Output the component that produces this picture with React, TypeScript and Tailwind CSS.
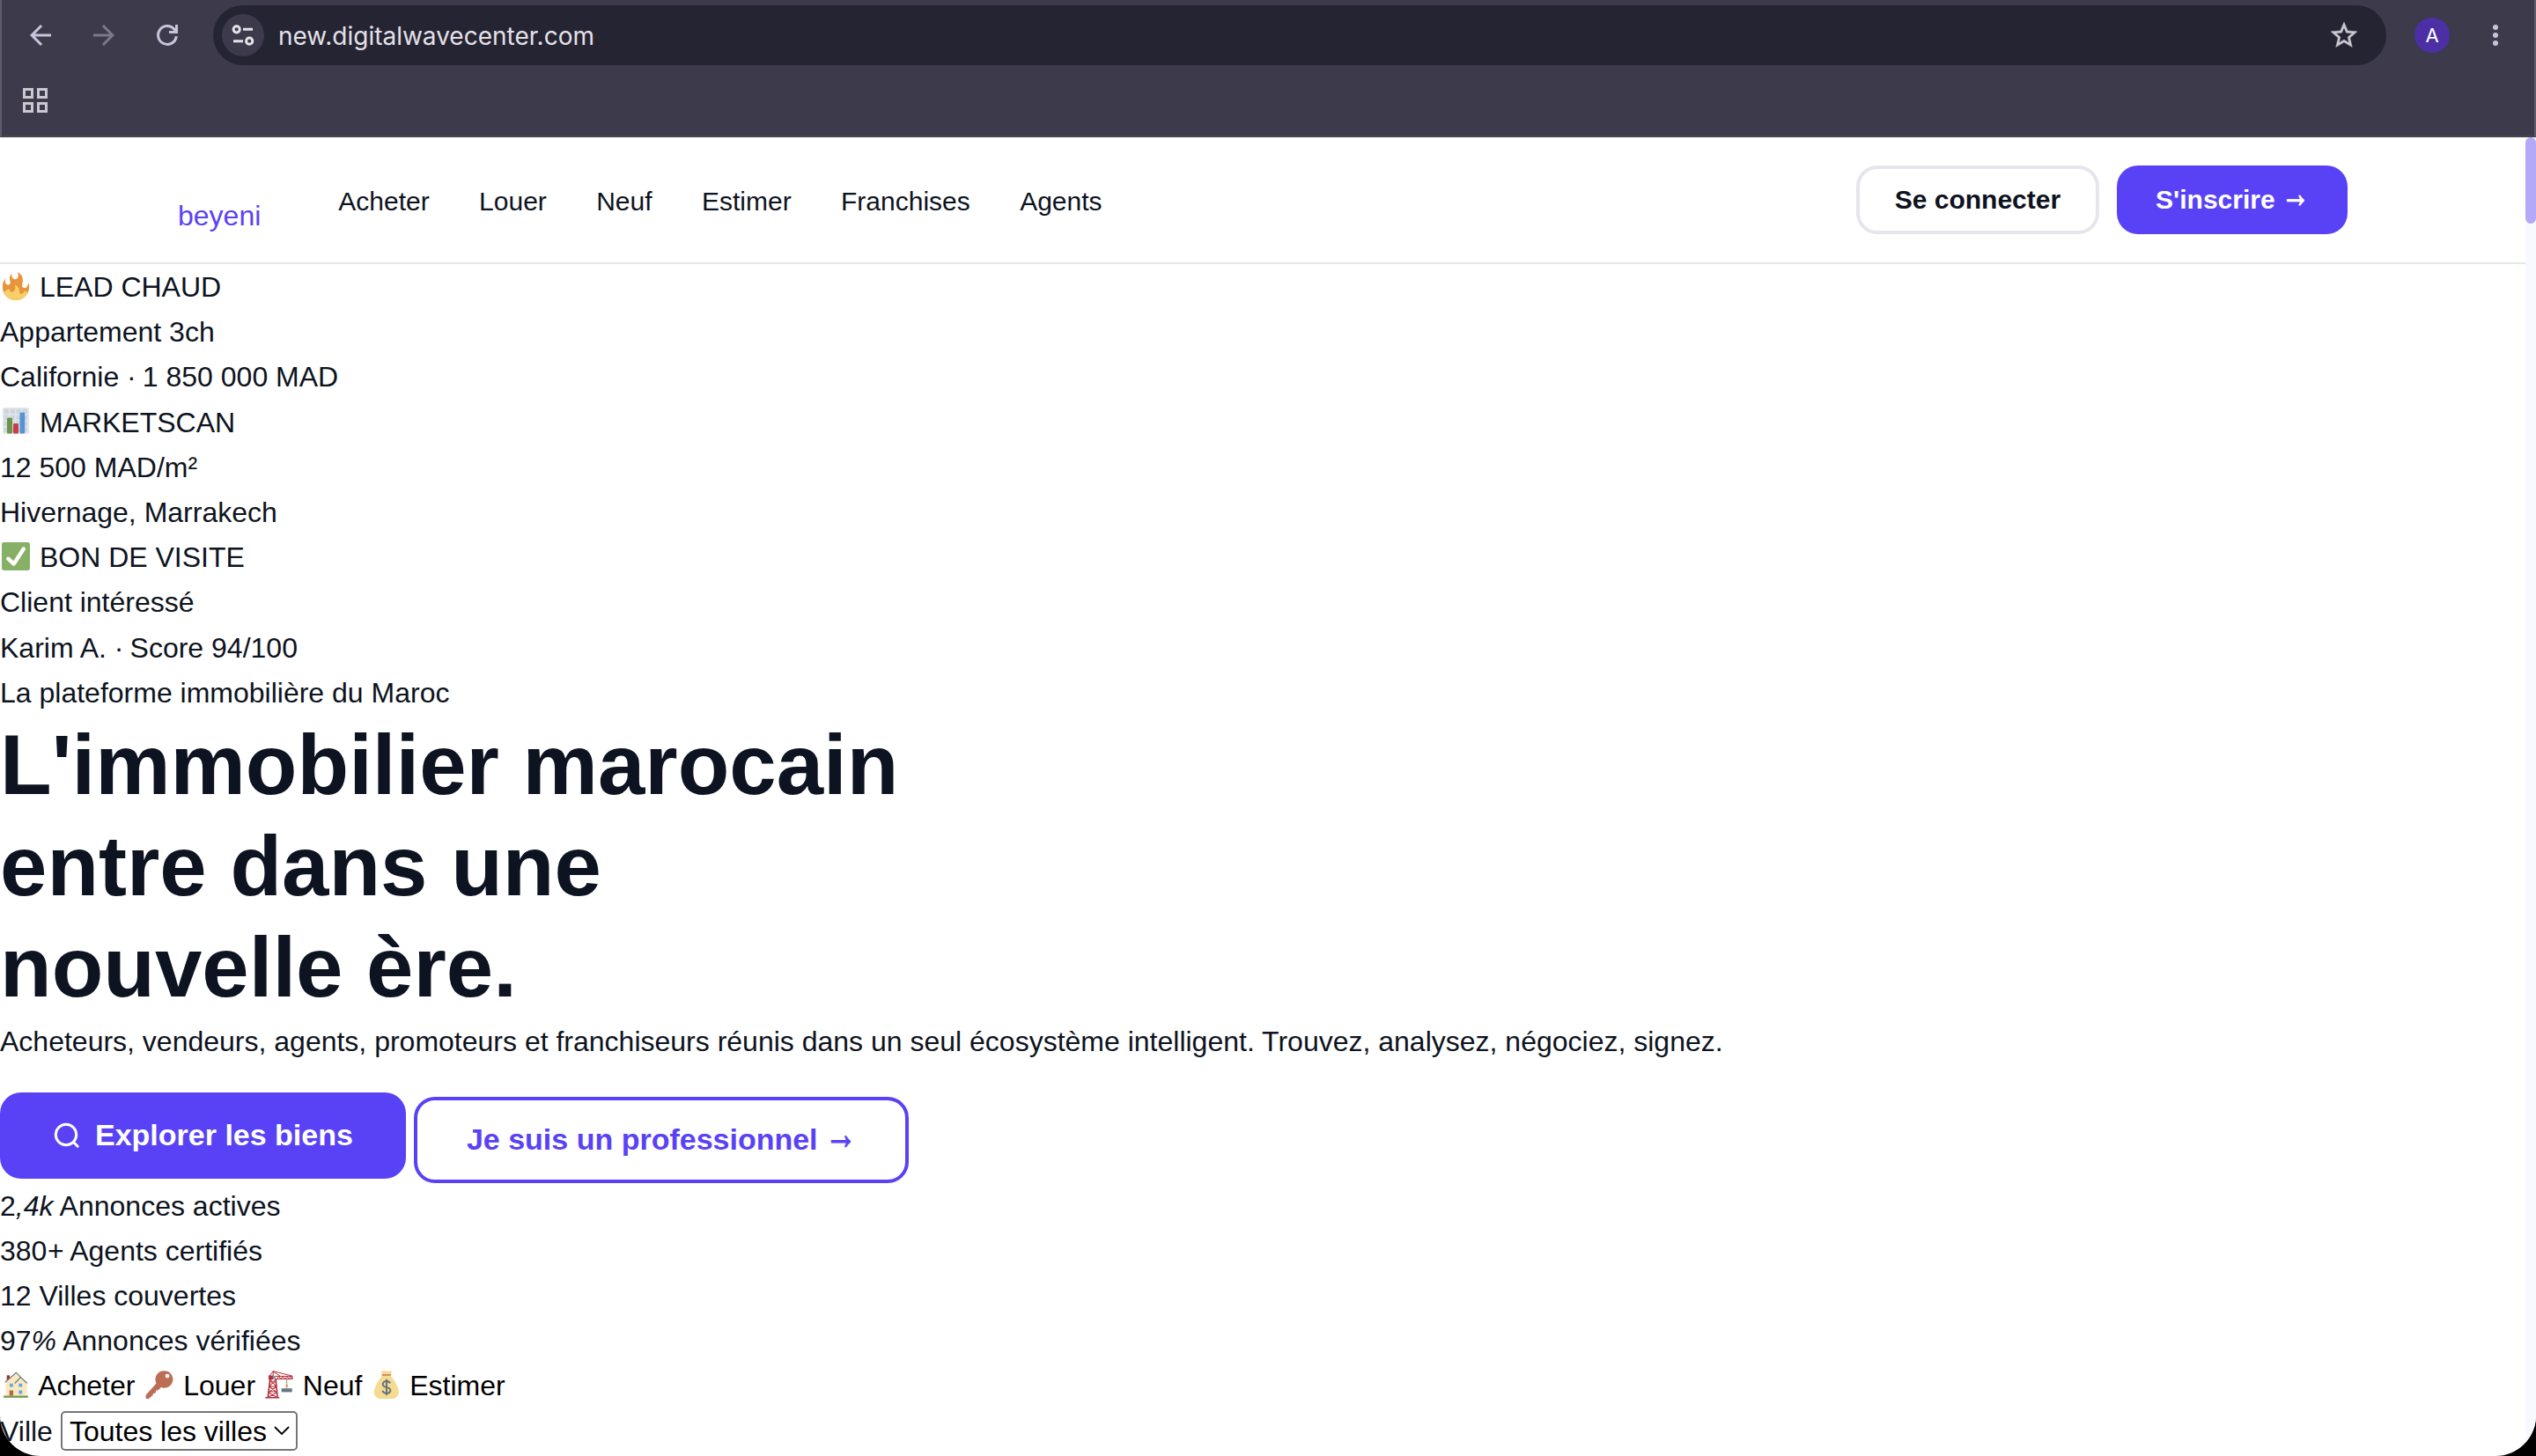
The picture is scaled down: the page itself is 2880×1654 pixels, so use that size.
import type { ReactNode } from 'react';

const navLinks = ['Acheter', 'Louer', 'Neuf', 'Estimer', 'Franchises', 'Agents'];

const Emoji = ({ box = 36, children }: { box?: number; children: ReactNode }) => (
  <svg viewBox={`0 0 ${box} ${box}`} className="inline-block w-[32px] h-[32px] mx-[2px] align-[-3.5px]">
    {children}
  </svg>
);

const Fire = () => (
  <Emoji>
    <path fill="#E8943A" d="M35 19c0-2.062-.367-4.039-1.04-5.868-.46 5.389-3.333 8.157-6.335 6.868-2.812-1.208-.917-5.917-.777-8.164.236-3.809-.012-8.169-6.931-11.794 2.875 5.5.333 8.917-2.333 9.125-2.958.231-5.667-2.542-4.667-7.042-3.238 2.386-3.332 6.402-2.333 9 1.042 2.708-.042 4.958-2.583 5.208-2.84.28-4.418-3.041-2.963-8.333C2.52 10.965 1 14.805 1 19c0 9.389 7.611 17 17 17s17-7.611 17-17z" />
    <path fill="#F6CF69" d="M28.394 23.999c.148 3.084-2.561 4.293-4.019 3.709-2.106-.843-1.541-2.291-2.083-5.291s-2.625-5.083-5.708-6c2.25 6.333-1.247 8.667-3.08 9.084-1.872.426-3.753-.001-3.968-4.007C4 25 1.6 25 3.2 27.3 6 32.6 11.500 36 18 36s12-3.400 14.800-8.700C34 25 31 25.500 28.394 23.999z" />
  </Emoji>
);

const Chart = () => (
  <Emoji box={32}>
    <rect x="1" y="1" width="30" height="30" rx="2" fill="#E1E6EC" />
    {[2.5, 9.5, 16.5, 23.5].map((y) =>
      [2.5, 9.5, 16.5, 23.5].map((x) => (
        <rect key={`${x}-${y}`} x={x} y={y} width="5.5" height="5.5" fill="#CED5DC" />
      ))
    )}
    <rect x="6" y="12.5" width="6" height="18" rx="1.5" fill="#6B9448" />
    <rect x="13" y="19" width="6" height="11.5" rx="1.5" fill="#C93C49" />
    <rect x="20.5" y="6.5" width="5.7" height="24" rx="1.5" fill="#5593D7" />
  </Emoji>
);

const Check = () => (
  <Emoji>
    <rect width="36" height="36" rx="2.7" fill="#85B065" />
    <path fill="#FFF" d="M29.28 6.362c-1.156-.751-2.704-.422-3.458.736L14.936 23.877l-5.029-4.65c-1.014-.938-2.596-.875-3.533.138-.937 1.014-.875 2.596.139 3.533l7.209 6.666c.48.445 1.09.665 1.696.665.673 0 1.534-.282 2.099-1.139.332-.506 12.5-19.27 12.5-19.27.751-1.159.421-2.707-.737-3.458z" />
  </Emoji>
);

const House = () => (
  <Emoji box={32}>
    <rect x="5.7" y="5.3" width="3.3" height="7" fill="#A02F3B" />
    <path fill="#FAE9BE" d="M4.5 12.5 16.3 2.5l5 4.5 7.2 6.5V28.5h-24z" />
    <path fill="none" stroke="#6B7780" strokeWidth="1.2" d="M3.8 13.2 16.3 2.2l5 5M14.7 14.5l6.8-7 7.3 7" />
    <path fill="#5FA6EA" d="M9 14.7h3.7v3.7H9zM19.4 14.7h3.8v3.7h-3.8zM19.4 22.6h3.8v3.8h-3.8z" />
    <path fill="#B26748" d="M8.7 22.6h4.3v6H8.7z" />
    <rect x="2" y="28.4" width="28" height="2.3" rx=".6" fill="#6D984B" />
  </Emoji>
);

const Key = () => (
  <Emoji box={32}>
    <path fill="#BC6E55" fillRule="evenodd" d="M21.5.2a9.8 9.8 0 1 1-3.6 18.9l-3.2 3.1-2.5.3-.6 2.9-2.7.5-.3 2.2-1.4.8-3.4 3H1.2C.5 31.5.6 29.5.6 27.7L12.5 14.5A9.8 9.8 0 0 1 21.5.2zM25 3.7a2.4 2.4 0 1 0 0 4.8 2.4 2.4 0 0 0 0-4.8z" />
  </Emoji>
);

const Crane = () => (
  <Emoji box={32}>
    <g fill="none" stroke="#B52F3C">
      <path strokeWidth="1.7" d="M5.7 10 3.2 30.5M12.2 10l1.9 20.5" />
      <path strokeWidth="1.1" d="M5.5 13h7M5.2 18h7.8M4.4 24h9M6 10l6.5 8M12 10l-7 8M5 18l8.5 7M13 18l-9 7M4 25l9 5M13 25l-9 5" />
      <path strokeWidth="1" d="M5 6.3 9.2.6 31 6.2M9.2.6v6M9 1l8 5" />
      <path strokeWidth="1" d="M12 6.4h19v3.1H12M13.5 9.5l2.2-3 2.3 3 2.3-3 2.3 3 2.3-3 2.2 3 2.2-3 2 3" />
    </g>
    <path fill="#B52F3C" d="M4 5.5h5v4.7H4zM.3 30H16.3v1.5H.3z" />
    <path fill="#8796A2" d="M9 5.8h3v4H9z" />
    <path stroke="#7A8790" strokeWidth=".9" d="M24.7 9.7V20" />
    <path fill="#F2A33A" d="M23.3 16h2.8v2.5h-2.8z" />
    <path fill="#687680" d="M18.7 20.2h12v4.2h-12z" />
  </Emoji>
);

const MoneyBag = () => (
  <Emoji box={32}>
    <path fill="#F7DA91" d="M10.7.6c1.3-.7 2.2.4 3.2 0s2.2-.6 3.1 0 2 .2 3.1 0 2.2-.6 2.9.1L21.3 5.5c3.2 3.8 7 9 8.5 14 .6 1.6 1.4 3.2 1.2 5.5-.3 2.4-1.9 3.8-2.9 5.2-.8 1.2-2 1.7-3.5 1.7H9c-1.5 0-2.7-.6-3.6-1.7-1-1.3-2.6-2.8-2.7-5.2-.2-2.2.7-3.7 1.3-5.5C5.5 14.5 9 9.3 12.4 5.5z" />
    <path fill="#C27A52" d="M11.6 4.2h10.5v1.5H11.6z" />
    <path fill="none" stroke="#66757F" strokeWidth="2" d="M21 14.5c-.5-1.6-2-2.4-4.1-2.4-2.4 0-4.2 1.2-4.2 3.3 0 4.6 8.7 2.3 8.7 6.9 0 2.1-1.9 3.4-4.4 3.4-2.4 0-4-1.1-4.5-3M17 9.7v18.4" />
  </Emoji>
);

const Arrow = () => (
  <span className="inline-block -translate-y-[7px] scale-x-[1.06] scale-y-[1.5] [-webkit-text-stroke:0.8px]">→</span>
);

const Toolbar = () => (
  <div className="h-[156px] bg-[#3c3a4b] border-x-2 border-x-[#5e5c6a] border-b-2 border-b-[#47444f]">
    <div className="h-[80px] flex items-center pl-[26px] pr-[26px]">
      <svg viewBox="0 0 24 24" className="w-[36px] h-[36px]" fill="#c9c3dc">
        <path d="M20 11H7.83l5.59-5.59L12 4l-8 8 8 8 1.41-1.41L7.83 13H20v-2z" />
      </svg>
      <svg viewBox="0 0 24 24" className="w-[36px] h-[36px] ml-[36px]" fill="#7c7886">
        <path d="m12 4-1.41 1.41L16.17 11H4v2h12.17l-5.58 5.59L12 20l8-8z" />
      </svg>
      <svg viewBox="0 0 36 36" className="w-[36px] h-[36px] ml-[36px]" fill="none" stroke="#c9c3dc" strokeWidth="3">
        <path d="M28.3 19.2A10.4 10.4 0 1 1 25.7 11l2.5 3" />
        <path d="M28.5 6v9.5M30 14.5H20" />
      </svg>
      <div className="ml-[34px] w-[2468px] h-[68px] rounded-full bg-[#252433] flex items-center pl-[10px] pr-[30px]">
        <div className="w-[48px] h-[48px] rounded-full bg-[#3c3a4b]">
          <svg viewBox="0 0 48 48" className="w-full h-full" fill="none" stroke="#e4e1e8" strokeWidth="3">
            <circle cx="16.7" cy="17.3" r="3.6" />
            <path d="M24 17.3h11M13 30.7h11" />
            <circle cx="31.2" cy="30.7" r="3.6" />
          </svg>
        </div>
        <span className="ml-[16px] pt-[1px] grow text-[28px] leading-none text-[#e4e1e8] font-['Inter',sans-serif]">new.digitalwavecenter.com</span>
        <svg viewBox="0 0 24 24" className="w-[36px] h-[36px]" fill="#cac7cf" stroke="#cac7cf" strokeWidth=".3">
          <path d="M22 9.24l-7.19-.62L12 2 9.19 8.63 2 9.24l5.46 4.73L5.82 21 12 17.27 18.18 21l-1.63-7.03L22 9.24zM12 15.4l-3.76 2.27 1-4.28-3.32-2.88 4.38-.38L12 6.1l1.71 4.04 4.38.38-3.32 2.88 1 4.28L12 15.4z" />
        </svg>
      </div>
      <div className="ml-[32px] w-[40px] h-[40px] rounded-full bg-[#4c2fa4] text-white text-[22px] leading-none font-['Inter',sans-serif] flex items-center justify-center">
        A
      </div>
      <svg viewBox="0 0 36 36" className="w-[36px] h-[36px] ml-[34px]" fill="#c9c3dc">
        <circle cx="18" cy="9" r="3" />
        <circle cx="18" cy="18" r="3" />
        <circle cx="18" cy="27" r="3" />
      </svg>
    </div>
    <svg viewBox="0 0 28 28" className="w-[28px] h-[28px] ml-[24px] mt-[20px]" fill="none" stroke="#cac7cf" strokeWidth="3">
      <path d="M1.5 1.5h9v9h-9zM17.5 1.5h9v9h-9zM1.5 17.5h9v9h-9zM17.5 17.5h9v9h-9z" />
    </svg>
  </div>
);

const Header = () => (
  <header className="h-[144px] border-b-2 border-[#e5e6eb] px-[202px] flex items-center">
    <span className="text-[#5942f5] mt-[37px]">beyeni</span>
    <nav className="ml-[88px] flex gap-[56.4px] text-[30px] leading-[48px] mt-[3px]">
      {navLinks.map((link) => (
        <a key={link}>{link}</a>
      ))}
    </nav>
    <div className="ml-auto flex gap-[20px] text-[30px] leading-[48px] font-bold">
      <button className="h-[78px] px-[40px] rounded-[24px] border-4 border-[#e5e6eb] flex items-center">Se connecter</button>
      <button className="h-[78px] px-[44px] rounded-[24px] bg-[#5942f5] text-white">S'inscrire <Arrow /></button>
    </div>
  </header>
);

const App = () => {
  return (
    <div className="w-[2880px] h-[1654px] bg-black overflow-hidden">
      <div className="h-full rounded-b-[46px] overflow-hidden bg-white flex flex-col text-[32px] leading-[51.2px] text-[#0d1320] font-['Liberation_Sans',Arial,sans-serif] whitespace-nowrap">
        <Toolbar />
        <div className="flex grow min-h-0">
          <div className="w-[2868px] h-[1498px] overflow-hidden">
            <Header />
            <div className="pt-[1px]">
              <div><Fire /> LEAD CHAUD</div>
              <div>Appartement 3ch</div>
              <div>Californie <span className="tracking-[-1.8px]">·</span> 1 850 000 MAD</div>
              <div><Chart /> MARKETSCAN</div>
              <div>12 500 MAD/m²</div>
              <div>Hivernage, Marrakech</div>
              <div><Check /> BON DE VISITE</div>
              <div>Client intéressé</div>
              <div>Karim A. <span className="tracking-[-1.8px]">·</span> Score 94/100</div>
              <div>La plateforme immobilière du Maroc</div>
            </div>

            <h1 className="-mt-[2px] mb-[1px] text-[96px] leading-[115.2px] font-bold">
              L'immobilier marocain<br />entre dans une<br />nouvelle ère.
            </h1>
            <p>Acheteurs, vendeurs, agents, promoteurs et franchiseurs réunis dans un seul écosystème intelligent. Trouvez, analysez, négociez, signez.</p>

            <div className="h-[135.7px] pt-[32px] flex items-start gap-[9px] text-[34px] font-bold">
              <button className="h-[98px] px-[60px] rounded-[24px] bg-[#5942f5] text-white flex items-center gap-[16px]">
                <svg viewBox="0 0 32 32" className="w-[32px] h-[32px]" fill="none" stroke="currentColor" strokeWidth="3" strokeLinecap="round">
                  <circle cx="15" cy="15" r="11.7" />
                  <path d="m23.5 23.5 4.7 4.7" />
                </svg>
                Explorer les biens
              </button>
              <button className="h-[98px] mt-[5px] px-[56px] rounded-[24px] border-4 border-[#5942f5] text-[#5942f5]">
                Je suis un professionnel <Arrow />
              </button>
            </div>

            <div>2<em>,4k</em> Annonces actives</div>
            <div>380<em>+</em> Agents certifiés</div>
            <div>12 Villes couvertes</div>
            <div>97<em>%</em> Annonces vérifiées</div>
            <div className="text-black">
              <House /> Acheter <span className="ml-[1px]"><Key /></span> Louer <Crane /> Neuf <MoneyBag /> Estimer
            </div>
            <div className="flex items-start">
              <label>Ville</label>
              <div className="ml-[9px] mt-[2px] w-[269px] h-[45px] rounded-[5px] border-2 border-[#767676] text-black flex items-center justify-between pl-[8px] pr-[7px]">
                <span className="pt-[3px]">Toutes les villes</span>
                <svg viewBox="0 0 18 10" className="w-[18px] h-[10px]" fill="none" stroke="currentColor" strokeWidth="1.8">
                  <path d="m1 1 8 8 8-8" />
                </svg>
              </div>
            </div>
          </div>
          <div className="w-[12px] bg-[#f8f9ff]">
            <div className="h-[98px] rounded-full bg-[#b4a9f9]" />
          </div>
        </div>
      </div>
    </div>
  );
};

export default App;
